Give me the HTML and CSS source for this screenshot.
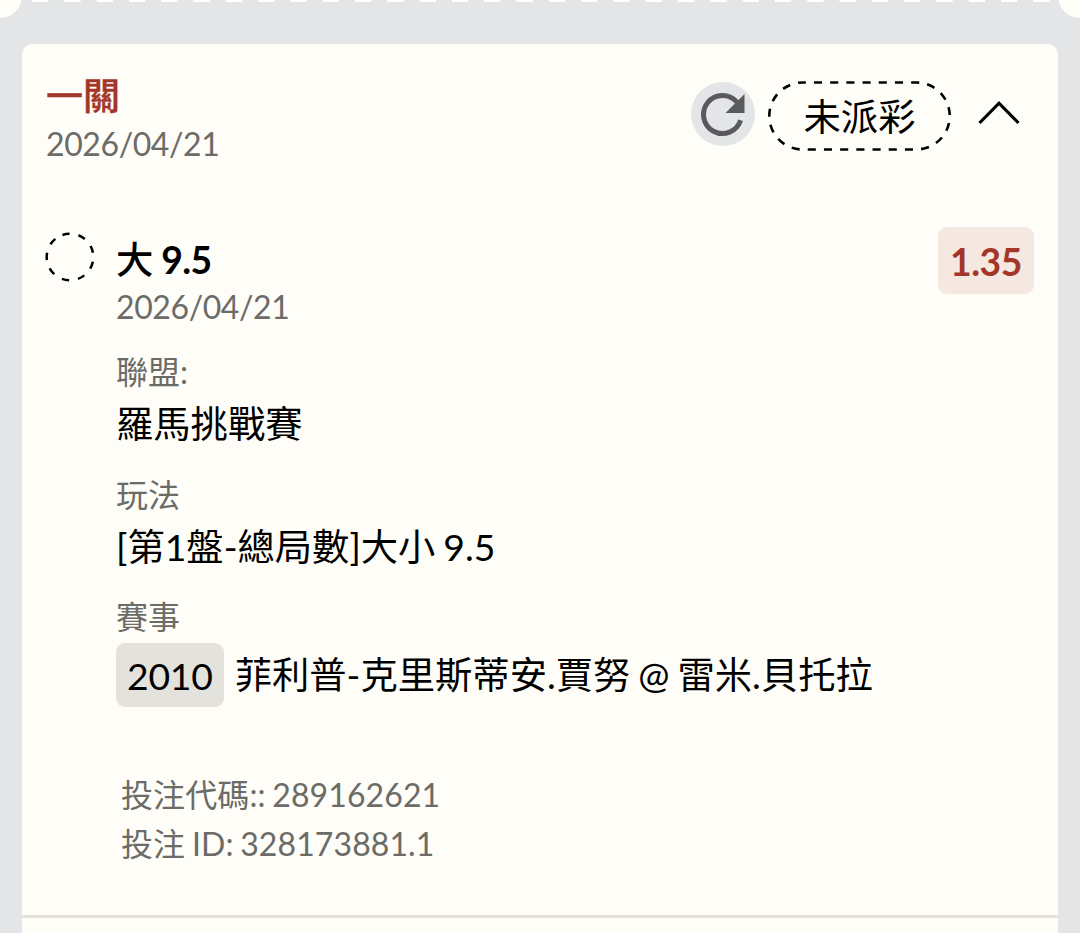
FILE: index.html
```html
<!DOCTYPE html>
<html lang="zh-Hant">
<head>
    <meta charset="UTF-8">
    <meta name="viewport" content="width=device-width, initial-scale=1.0">
    <title>投注紀錄</title>
    <link rel="stylesheet" href="styles.css">
</head>
<body>
    <!-- Bottom edge of the previous ticket -->
    <div class="ticket-edge">
        <span class="notch notch-left"></span>
        <svg class="tear-line" width="1036" height="2" viewBox="0 0 1036 2">
            <line x1="10" y1="1" x2="1032" y2="1" stroke="#fffffb" stroke-width="2" stroke-dasharray="16.3 16"/>
        </svg>
        <span class="notch notch-right"></span>
    </div>

    <div class="card">
        <div class="card-header">
            <div class="card-title">
                <h2>一關</h2>
                <p class="date">2026/04/21</p>
            </div>
            <div class="card-actions">
                <button class="refresh">
                    <svg width="64" height="64" viewBox="0 0 64 64">
                        <path d="M46 20.2A19 19 0 1 0 49.6 38.3" fill="none" stroke="#595a5c" stroke-width="5"/>
                        <path d="M53.5 12V31H34.5z" fill="#595a5c"/>
                    </svg>
                </button>
                <div class="status">
                    <svg class="status-border" width="183" height="70" viewBox="0 0 183 70">
                        <rect x="1.25" y="1.5" width="180.5" height="67" rx="33.5" fill="none" stroke="#000" stroke-width="2.6" stroke-dasharray="8.1 8.1" stroke-dashoffset="5"/>
                    </svg>
                    <span>未派彩</span>
                </div>
                <svg class="chevron" width="44" height="26" viewBox="0 0 44 26">
                    <path d="M2.5 23L22 3.2L41.5 23" fill="none" stroke="#000" stroke-width="3.2"/>
                </svg>
            </div>
        </div>

        <div class="bet">
            <svg class="bet-state" width="50" height="50" viewBox="0 0 50 50">
                <circle cx="25" cy="25" r="23.3" fill="none" stroke="#000" stroke-width="2.5" stroke-dasharray="7.3 8.96" transform="rotate(-109 25 25)"/>
            </svg>
            <div class="bet-info">
                <h3><span>大</span> 9.5</h3>
                <p class="date">2026/04/21</p>
                <p class="label">聯盟:</p>
                <p class="value">羅馬挑戰賽</p>
                <p class="label">玩法</p>
                <p class="value">[第1盤-總局數]大小 9.5</p>
                <p class="label">賽事</p>
                <div class="match">
                    <span class="match-no">2010</span>
                    <span class="value">菲利普-克里斯蒂安.賈努 @ 雷米.貝托拉</span>
                </div>
                <div class="codes">
                    <p>投注代碼:: 289162621</p>
                    <p>投注 ID: 328173881.1</p>
                </div>
            </div>
            <div class="odds">1.35</div>
        </div>
    </div>
</body>
</html>
```
FILE: styles.css
```css
* {
    box-sizing: border-box;
}

body {
    margin: 0;
    height: 933px;
    overflow: hidden;
    display: flex;
    flex-direction: column;
    background-color: #e4e5e7;
    color: #000;
    font-family: Lato, "Noto Sans CJK TC", sans-serif;
    font-size: 37.3px;
    word-spacing: -1.6px;
}

h2, h3, p {
    margin: 0;
}

.ticket-edge {
    position: relative;
    height: 44px;
    flex-shrink: 0;
    padding: 0 22px;
}

.tear-line {
    display: block;
}

.notch {
    position: absolute;
    top: -26px;
    width: 44px;
    height: 44px;
    border-radius: 50%;
    background-color: #fffdf7;
}

.notch-left {
    left: -22px;
}

.notch-right {
    right: -22px;
}

.card {
    flex: 1;
    margin: 0 22px;
    border-radius: 10px 10px 0 0;
    background-color: #fffdf7;
}

.card-header {
    display: flex;
    justify-content: space-between;
    align-items: flex-start;
    height: 182px;
    padding: 28px 37px 0 24px;
}

.card-title h2 {
    font-size: 37px;
    font-weight: 500;
    line-height: 48px;
    color: #a33629;
    -webkit-text-stroke: 0.4px #a33629;
}

.date {
    font-size: 32px;
    line-height: 47px;
    letter-spacing: -0.4px;
    color: #6b6b68;
}

.card-actions {
    display: flex;
    align-items: flex-start;
    margin-top: 9px;
}

.refresh {
    width: 64px;
    height: 64px;
    margin: 1px 13px 0 0;
    padding: 0;
    border: none;
    border-radius: 50%;
    background-color: #e4e5e7;
}

.refresh svg {
    display: block;
}

.status {
    position: relative;
    width: 183px;
    height: 70px;
    line-height: 71px;
    text-align: center;
}

.status-border {
    position: absolute;
    left: 0;
    top: 0;
}

.chevron {
    margin: 19px 0 0 26px;
}

.bet {
    display: flex;
    align-items: flex-start;
    height: 692px;
    padding: 1px 24px 0 23px;
    border-bottom: 3px solid #e4e2dc;
}

.bet-state {
    margin: 5px 21px 0 0;
}

.bet-info {
    flex: 1;
    padding-top: 9px;
}

.bet-info h3 {
    font-size: 37.3px;
    font-weight: 700;
    line-height: 47px;
    letter-spacing: -0.6px;
    word-spacing: 0;
}

.bet-info h3 span {
    font-weight: 500;
}

.label {
    margin-top: 17px;
    font-size: 32px;
    line-height: 49px;
    color: #6b6b68;
}

.value {
    line-height: 56.5px;
}

.match {
    display: flex;
    align-items: center;
    gap: 11px;
    margin-top: 2px;
}

.match-no {
    height: 64px;
    padding: 0 11px;
    border-radius: 9px;
    background-color: #e4e2dc;
    line-height: 66px;
    letter-spacing: -0.2px;
}

.codes {
    margin-top: 64px;
    padding-left: 5px;
    font-size: 32px;
    line-height: 48.5px;
    letter-spacing: 0.1px;
    color: #6b6b68;
}

.odds {
    width: 96px;
    height: 67px;
    border-radius: 9px;
    background-color: #f5e8e1;
    color: #a33629;
    font-weight: 700;
    line-height: 70px;
    letter-spacing: -0.4px;
    text-align: center;
}
```
